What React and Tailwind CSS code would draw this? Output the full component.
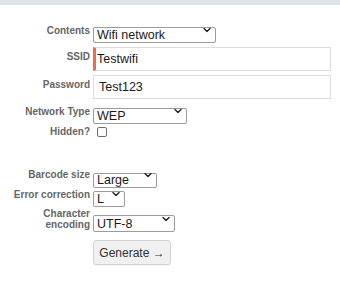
import React, { useState } from 'react';

const Chevron = () => (
  <svg
    className="pointer-events-none absolute right-[5px] top-1/2 -translate-y-1/2"
    width="8"
    height="5"
    viewBox="0 0 8 5"
    fill="none"
  >
    <path d="M1 1l3 3 3-3" stroke="#222" strokeWidth="1.4" strokeLinecap="round" strokeLinejoin="round" />
  </svg>
);

const Select = ({ value, options, width, height, onChange }) => (
  <div className={`relative ${width} ${height}`}>
    <select
      value={value}
      onChange={(e) => onChange(e.target.value)}
      className="w-full h-full appearance-none border border-[#9c9c9c] rounded-[2px] bg-white pl-[3px] pr-4 text-[12.5px] leading-none text-[#1a1a1a] outline-none"
    >
      {options.map((o) => (
        <option key={o} value={o}>{o}</option>
      ))}
    </select>
    <Chevron />
  </div>
);

const Label = ({ children, className = '' }) => (
  <label className={`w-[90px] shrink-0 text-right text-[10px] font-bold leading-[11px] text-[#666] ${className}`}>
    {children}
  </label>
);

const App = () => {
  const [form, setForm] = useState({
    contents: 'Wifi network',
    ssid: 'Testwifi',
    password: 'Test123',
    networkType: 'WEP',
    hidden: false,
    size: 'Large',
    ecc: 'L',
    encoding: 'UTF-8',
  });

  const set = (key) => (val) => setForm((f) => ({ ...f, [key]: val }));

  return (
    <div className="w-[340px] h-[296px] bg-white font-['Liberation_Sans',Arial,sans-serif]">
      <div className="h-[5px] bg-[#dfe3ea]" />

      <div className="flex flex-col pt-[17px]">
        {/* Contents */}
        <div className="flex items-center gap-[3px]">
          <Label>Contents</Label>
          <Select value={form.contents} options={['Wifi network', 'Text', 'URL', 'Phone number']} width="w-[123px]" height="h-[16px]" onChange={set('contents')} />
        </div>

        {/* SSID */}
        <div className="flex items-start gap-[3px] mt-[9px]">
          <Label className="pt-[4px]">SSID</Label>
          <input
            value={form.ssid}
            onChange={(e) => set('ssid')(e.target.value)}
            className="w-[238px] h-[24px] border border-[#dcdcdc] border-l-[3px] border-l-[#ee6b4e] pl-[1px] text-[12.5px] text-[#1a1a1a] outline-none"
          />
        </div>

        {/* Password */}
        <div className="flex items-start gap-[3px] mt-[4px]">
          <Label className="pt-[4px]">Password</Label>
          <input
            value={form.password}
            onChange={(e) => set('password')(e.target.value)}
            className="w-[238px] h-[24px] border border-[#dcdcdc] pl-[5px] text-[12.5px] text-[#1a1a1a] outline-none"
          />
        </div>

        {/* Network type */}
        <div className="flex items-center gap-[3px] mt-[4px]">
          <Label>Network Type</Label>
          <Select value={form.networkType} options={['WEP', 'WPA/WPA2', 'None']} width="w-[94px]" height="h-[16px]" onChange={set('networkType')} />
        </div>

        {/* Hidden */}
        <div className="flex items-center gap-[3px] mt-[7px]">
          <Label>Hidden?</Label>
          <input
            type="checkbox"
            checked={form.hidden}
            onChange={(e) => set('hidden')(e.target.checked)}
            className="ml-[4px] w-[10px] h-[10px] appearance-none border border-[#6e6e6e] rounded-[2px] bg-white"
          />
        </div>

        {/* Barcode size */}
        <div className="flex items-center gap-[3px] mt-[30px]">
          <Label>Barcode size</Label>
          <Select value={form.size} options={['Small', 'Medium', 'Large']} width="w-[64px]" height="h-[15px]" onChange={set('size')} />
        </div>

        {/* Error correction */}
        <div className="flex items-center gap-[3px] mt-[4px]">
          <Label>Error correction</Label>
          <Select value={form.ecc} options={['L', 'M', 'Q', 'H']} width="w-[32px]" height="h-[16px]" onChange={set('ecc')} />
        </div>

        {/* Character encoding */}
        <div className="flex items-center gap-[3px] mt-[6px]">
          <Label>Character<br />encoding</Label>
          <Select value={form.encoding} options={['UTF-8', 'Shift_JIS', 'ISO-8859-1']} width="w-[82px]" height="h-[17px]" onChange={set('encoding')} />
        </div>

        {/* Generate */}
        <div className="flex gap-[3px] mt-[10px]">
          <div className="w-[90px] shrink-0" />
          <button className="w-[78px] h-[25px] border border-[#d2d2d2] rounded-[3px] bg-[#f0f0f0] text-[12px] text-[#333] shadow-[0_1px_1px_rgba(0,0,0,0.05)]">
            Generate →
          </button>
        </div>
      </div>
    </div>
  );
};

export default App;
